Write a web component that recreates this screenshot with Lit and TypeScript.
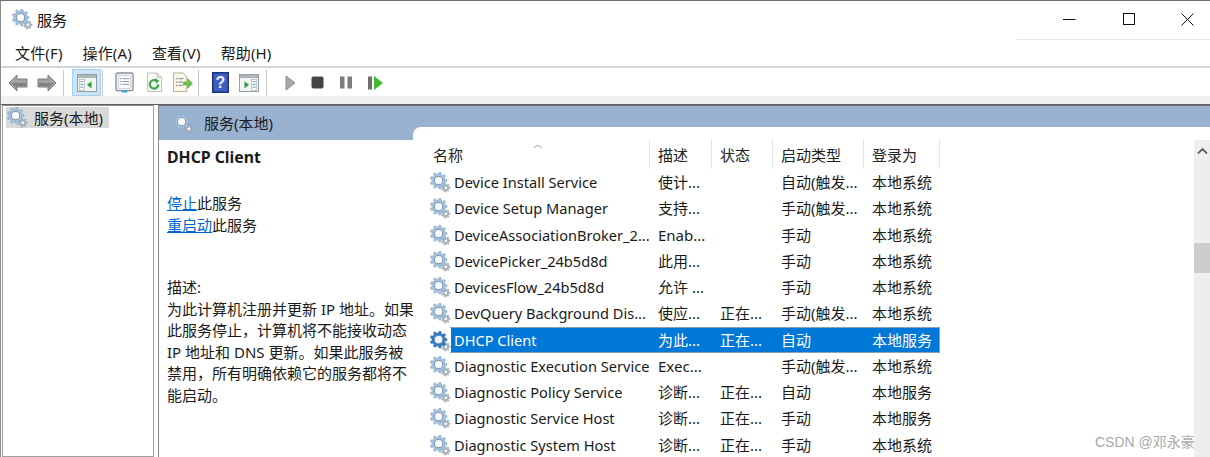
import { LitElement, html, css, svg } from 'lit';
import { customElement } from 'lit/decorators.js';

// gear outline, computed so both cogs share one shape
function gearPath(cx: number, cy: number, outer: number, inner: number, teeth: number) {
  const pts: string[] = [];
  const step = (Math.PI * 2) / teeth;
  for (let i = 0; i < teeth; i++) {
    const a = i * step;
    const list: [number, number][] = [
      [a - step * 0.32, inner],
      [a - step * 0.17, outer],
      [a + step * 0.17, outer],
      [a + step * 0.32, inner],
    ];
    for (const [t, r] of list) {
      pts.push(`${(cx + Math.cos(t) * r).toFixed(2)} ${(cy + Math.sin(t) * r).toFixed(2)}`);
    }
  }
  return 'M' + pts.join('L') + 'Z';
}

const BIG = gearPath(9, 9, 8.8, 6.8, 9);
const SMALL = gearPath(16.5, 16.5, 4.6, 3.2, 7);

function gear(selected = false, size = 21) {
  const main = selected ? '#2f7cc8' : '#a6c2de';
  const edge = selected ? '#2a5f9e' : '#7f9fbf';
  const hole = selected ? '#eef5fb' : '#f8fafc';
  return html`<svg class="gear" width=${size} height=${size} viewBox="0 0 22 22">
    <path d=${SMALL} fill="#a9b5c0" stroke="#8c99a6" stroke-width=".5"></path>
    <circle cx="16.5" cy="16.5" r="1.4" fill="#fff"></circle>
    <path d=${BIG} fill=${main} stroke=${edge} stroke-width=".6"></path>
    <circle cx="9" cy="9" r="4.3" fill=${hole} stroke="#6f8dac" stroke-width="1"></circle>
  </svg>`;
}

const windowIcon = (inner: unknown) => html`<svg width="20" height="18" viewBox="0 0 22 20">
  <rect x=".5" y=".5" width="21" height="19" fill="#f2f5f2" stroke="#8b9599"></rect>
  <rect x="1" y="1" width="20" height="3.5" fill="#aeb6ba"></rect>
  ${inner}
</svg>`;

const ICONS = {
  back: html`<svg width="20" height="18" viewBox="0 0 20 18"><path d="M9 1 1 9l8 8v-4h10V5H9z" fill="#a2a2a2" stroke="#7c7c7c" stroke-linejoin="round"></path><path d="M3.500 9H18v3H9v2.500z" fill="#808080"></path></svg>`,
  forward: html`<svg width="20" height="18" viewBox="0 0 20 18"><path d="M11 1l8 8-8 8v-4H1V5h10z" fill="#a2a2a2" stroke="#7c7c7c" stroke-linejoin="round"></path><path d="M16.500 9H2v3h9v2.500z" fill="#808080"></path></svg>`,
  tree: windowIcon(svg`
    <rect x="2.500" y="6" width="5.500" height="12" fill="#fff" stroke="#8ba0b0" stroke-width=".6"></rect>
    <path d="M3.500 8.500h3.500M3.500 11.500h3.500M3.500 14.500h3.500" stroke="#5f84a6"></path>
    <path d="M16 8v8l-5-4z" fill="#2e9e3e"></path>`),
  props: html`<svg width="19" height="21" viewBox="0 0 20 22">
    <rect x="1" y="1" width="18" height="18.500" rx="1.500" fill="#eef1f3" stroke="#8a9198" stroke-width="1.400"></rect>
    <rect x="3.500" y="4" width="13" height="13" fill="#fff" stroke="#b5bcc2" stroke-width=".6"></rect>
    <path d="M5 7h2M8 7h7M5 10h2M8 10h7M5 13h2M8 13h7" stroke="#7b94ad"></path>
    <rect x="7" y="19.500" width="6" height="2" fill="#33a5e5"></rect></svg>`,
  refresh: html`<svg width="17" height="21" viewBox="0 0 18 22">
    <path d="M1.500 1h10.500l4.500 4.500V20.500H1.500z" fill="#fbfbf6" stroke="#b8bcb2"></path>
    <path d="M12 1v4.500h4.500" fill="#e3e5de" stroke="#b8bcb2"></path>
    <path d="M13 13a4.500 4.500 0 1 1-2-3.800" fill="none" stroke="#3aa853" stroke-width="2.400"></path>
    <path d="M9.500 6.500l4.500 2.500-3 3.500z" fill="#3aa853"></path></svg>`,
  export: html`<svg width="21" height="21" viewBox="0 0 22 22">
    <path d="M1.500 1h10l4 4v15.500h-14z" fill="#fbf7e6" stroke="#b1ab93"></path>
    <path d="M4 7h2M7 7h5M4 10.500h2M7 10.500h4M4 14h2M7 14h4" stroke="#6a7a8a"></path>
    <path d="M12 10.500h4.500V7l5 5-5 5v-3.500H12z" fill="#6cc04f" stroke="#4fa83a" stroke-width=".6"></path></svg>`,
  help: html`<svg width="17" height="21" viewBox="0 0 17 21">
    <rect x=".5" y=".5" width="16" height="20" fill="#2a479f" stroke="#1e3480"></rect>
    <rect x="2" y="2" width="13" height="17" fill="#3f5fc4"></rect>
    <text x="8.500" y="16" text-anchor="middle" font-size="16" font-weight="700" font-family="Liberation Sans" fill="#eef">?</text></svg>`,
  panel: windowIcon(svg`
    <rect x="14" y="6" width="5.500" height="12" fill="#fff" stroke="#8ba0b0" stroke-width=".6"></rect>
    <path d="M15 8.500h3.500M15 11.500h3.500M15 14.500h3.500" stroke="#5f84a6"></path>
    <path d="M6 8v8l5-4z" fill="#2e9e3e"></path>`),
  play: html`<svg width="11" height="16" viewBox="0 0 11 16"><path d="M1 1l9 7-9 7z" fill="#a8a8a8" stroke="#8a8a8a"></path></svg>`,
  stop: html`<svg width="13" height="13" viewBox="0 0 13 13"><rect x=".5" y=".5" width="12" height="12" rx="2" fill="#454545"></rect></svg>`,
  pause: html`<svg width="12" height="13" viewBox="0 0 12 13"><rect y=".5" width="4.500" height="12" fill="#7d7d7d"></rect><rect x="7.500" y=".5" width="4.500" height="12" fill="#7d7d7d"></rect></svg>`,
  resume: html`<svg width="15" height="14" viewBox="0 0 15 14"><rect y=".5" width="4" height="13" fill="#6f6f6f"></rect><path d="M6 0l9 7-9 7z" fill="#3dbb35"></path></svg>`,
};

const ROWS = [
  ['Device Install Service', '使计...', '', '自动(触发...', '本地系统'],
  ['Device Setup Manager', '支持...', '', '手动(触发...', '本地系统'],
  ['DeviceAssociationBroker_2...', 'Enab...', '', '手动', '本地系统'],
  ['DevicePicker_24b5d8d', '此用...', '', '手动', '本地系统'],
  ['DevicesFlow_24b5d8d', '允许 ...', '', '手动', '本地系统'],
  ['DevQuery Background Dis...', '使应...', '正在...', '手动(触发...', '本地系统'],
  ['DHCP Client', '为此...', '正在...', '自动', '本地服务'],
  ['Diagnostic Execution Service', 'Exec...', '', '手动(触发...', '本地系统'],
  ['Diagnostic Policy Service', '诊断...', '正在...', '自动', '本地服务'],
  ['Diagnostic Service Host', '诊断...', '正在...', '手动', '本地服务'],
  ['Diagnostic System Host', '诊断...', '正在...', '手动', '本地系统'],
];

const HEADS = ['名称', '描述', '状态', '启动类型', '登录为'];

// full-width comma, spelled out so it survives editors
const COMMA = '\uFF0C';
const DESCRIPTION = [
  '为此计算机注册并更新 IP 地址。如果',
  `此服务停止${COMMA}计算机将不能接收动态`,
  'IP 地址和 DNS 更新。如果此服务被',
  `禁用${COMMA}所有明确依赖它的服务都将不`,
  '能启动。',
];

@customElement('app-root')
export class AppRoot extends LitElement {
  static styles = css`
    :host {
      display: block;
      position: relative;
      width: 1210px;
      height: 457px;
      overflow: hidden;
      background: #fff;
      color: #1a1a1a;
      font-family: 'Noto Sans', 'Noto Sans CJK SC', sans-serif;
      font-size: 15px;
    }
    .window {
      height: 457px;
      display: flex;
      flex-direction: column;
      border-top: 1px solid #6e6e6e;
      border-left: 1px solid #8a8a8a;
      box-sizing: border-box;
    }
    .titlebar {
      height: 39px;
      flex: none;
      display: flex;
      align-items: center;
      padding: 0 0 3px 11px;
      gap: 4px;
      color: #111;
      position: relative;
      box-sizing: border-box;
    }
    .titlebar::after {
      content: '';
      position: absolute;
      left: 1016px;
      right: 0;
      bottom: 0;
      height: 1px;
      background: #e8e8e8;
    }
    .controls {
      margin-left: auto;
      display: flex;
      align-items: center;
      padding-right: 16px;
    }
    .ctl {
      width: 59px;
      height: 36px;
      display: flex;
      align-items: center;
      justify-content: flex-end;
    }
    .menu {
      height: 24px;
      flex: none;
      display: flex;
      align-items: center;
      padding: 0 0 2px 14px;
      gap: 20px;
      letter-spacing: 0.15px;
      box-sizing: content-box;
      border-bottom: 2px solid #d0d6dd;
    }
    .toolbar {
      height: 28px;
      flex: none;
      display: flex;
      align-items: center;
      padding: 1px 0 0 7px;
      box-sizing: border-box;
    }
    .tb {
      display: flex;
      align-items: center;
      flex: none;
      height: 27px;
      box-sizing: border-box;
    }
    .tb.on {
      justify-content: center;
      width: 29px;
      margin: 0 1px 0 8px;
      background: #cce4f7;
      border: 1px solid #a8d0ee;
    }
    .back { width: 29px; }
    .forward { width: 26px; }
    .props { width: 43px; padding-left: 12px; }
    .refresh { width: 26px; }
    .export { width: 26px; }
    .help { width: 40px; padding-left: 13px; }
    .panel { width: 27px; }
    .play { width: 44px; padding-left: 18px; }
    .stop { width: 29px; }
    .pause { width: 28px; }
    .tbsep {
      width: 1px;
      height: 26px;
      flex: none;
      background: #c9c9c9;
    }
    .band {
      height: 8px;
      flex: none;
      background: #f0f0f0;
      border-bottom: 1px solid #5f5f5f;
    }
    .body {
      flex: 1;
      min-height: 0;
      display: flex;
      gap: 4px;
      padding-left: 1px;
    }
    .tree {
      width: 152px;
      flex: none;
      border: 1px solid #a0a0a0;
      border-top: 1px solid #8a8a8a;
      box-sizing: border-box;
      padding: 1px 0 0 3px;
    }
    .tree-item {
      display: inline-flex;
      align-items: center;
      width: 103px;
      height: 21px;
      background: #d9d9d9;
      gap: 6px;
      padding-left: 1px;
      box-sizing: border-box;
    }
    .main {
      flex: 1;
      min-width: 0;
      display: flex;
      flex-direction: column;
      border-left: 1px solid #8a8a8a;
      border-top: 1px solid #6f6f6f;
    }
    .main-head {
      height: 14px;
      flex: none;
      background: #98b2d0;
      display: flex;
      align-items: flex-start;
      padding: 7px 0 0 14px;
      gap: 10px;
      position: relative;
      z-index: 1;
    }
    .main-head span {
      line-height: 22px;
      margin-top: -1px;
    }
    .split {
      flex: 1;
      min-height: 0;
      display: flex;
    }
    .info {
      width: 254px;
      flex: none;
      display: flex;
      flex-direction: column;
    }
    .info-head {
      height: 13px;
      flex: none;
      background: #98b2d0;
    }
    .info-body {
      padding: 7px 0 0 8px;
      line-height: 21.5px;
      white-space: nowrap;
    }
    .info-title {
      font-weight: 700;
      font-size: 15.8px;
      height: 46px;
    }
    .actions {
      height: 84px;
    }
    a {
      color: #0066cc;
      text-decoration: underline;
    }
    .list {
      flex: 1;
      min-width: 0;
      position: relative;
      display: flex;
      background: #fff;
    }
    .corner {
      position: absolute;
      left: 0;
      top: 0;
      width: 8px;
      height: 8px;
      background: #98b2d0;
    }
    .corner::after {
      content: '';
      display: block;
      width: 8px;
      height: 8px;
      background: #fff;
      border-top-left-radius: 8px;
    }
    .table {
      flex: 1;
      min-width: 0;
      padding: 12px 0 0 12px;
    }
    .cols {
      display: grid;
      grid-template-columns: 225px 62px 61px 91px 76px;
    }
    .th {
      height: 30px;
      display: flex;
      align-items: center;
      padding-left: 8px;
      box-sizing: border-box;
      border-right: 1px solid #e6e6e6;
      color: #222;
      position: relative;
    }
    .caret {
      position: absolute;
      left: 108px;
      top: 0;
      font-size: 9px;
      color: #8a8a8a;
      line-height: 10px;
    }
    .row {
      display: contents;
    }
    .td {
      height: 26.25px;
      line-height: 26.25px;
      padding-left: 8px;
      white-space: nowrap;
      overflow: hidden;
      box-sizing: border-box;
    }
    .td.name {
      padding-left: 29px;
      position: relative;
      overflow: visible;
      font-size: 14.6px;
    }
    .td.name .gear {
      position: absolute;
      left: 5px;
      top: 3px;
    }
    .row.sel .td {
      background: #0078d7;
      color: #fff;
      border-top: 1px solid #8aa0b5;
      border-bottom: 1px solid #8aa0b5;
      line-height: 24.25px;
    }
    .row.sel .td.name {
      background: linear-gradient(90deg, transparent 26px, #0078d7 26px);
      border-image: linear-gradient(90deg, transparent 26px, #8aa0b5 26px) 1;
    }
    .row.sel .td.last {
      border-right: 1px solid #8aa0b5;
    }
    .vbar {
      width: 16px;
      flex: none;
      margin-top: 13px;
      background: #eeeeee;
      padding-top: 8px;
      box-sizing: border-box;
      display: flex;
      flex-direction: column;
      align-items: center;
      gap: 89px;
    }
    .thumb {
      width: 100%;
      height: 30px;
      background: #cdcdcd;
    }
    .mark {
      position: absolute;
      left: 1095px;
      top: 431px;
      width: 100px;
      overflow: hidden;
      white-space: nowrap;
      color: #a8a8a8;
      font-family: 'Liberation Sans', 'Noto Sans CJK SC', sans-serif;
      font-size: 14px;
    }
  `;

  render() {
    return html`<div class="window">
        <div class="titlebar">
          ${gear()}
          <span>服务</span>
          <div class="controls">
            <div class="ctl">
              <svg width="13" height="13" viewBox="0 0 13 13"><path d="M0 6.500h12.500" stroke="#111"></path></svg>
            </div>
            <div class="ctl">
              <svg width="12" height="12" viewBox="0 0 12 12"><rect x=".5" y=".5" width="11" height="11" fill="none" stroke="#111"></rect></svg>
            </div>
            <div class="ctl">
              <svg width="13" height="13" viewBox="0 0 13 13"><path d="M.5.500l12 12M12.500.500l-12 12" stroke="#111"></path></svg>
            </div>
          </div>
        </div>
        <div class="menu">
          <span>文件(F)</span><span>操作(A)</span><span>查看(V)</span><span>帮助(H)</span>
        </div>
        <div class="toolbar">
          <div class="tb back">${ICONS.back}</div>
          <div class="tb forward">${ICONS.forward}</div>
          <div class="tbsep"></div>
          <div class="tb on">${ICONS.tree}</div>
          <div class="tbsep"></div>
          <div class="tb props">${ICONS.props}</div>
          <div class="tb refresh">${ICONS.refresh}</div>
          <div class="tb export">${ICONS.export}</div>
          <div class="tbsep"></div>
          <div class="tb help">${ICONS.help}</div>
          <div class="tb panel">${ICONS.panel}</div>
          <div class="tbsep"></div>
          <div class="tb play">${ICONS.play}</div>
          <div class="tb stop">${ICONS.stop}</div>
          <div class="tb pause">${ICONS.pause}</div>
          <div class="tb">${ICONS.resume}</div>
        </div>
        <div class="band"></div>
        <div class="body">
          <div class="tree">
            <div class="tree-item">${gear()}<span>服务(本地)</span></div>
          </div>
          <div class="main">
            <div class="main-head">${gear()}<span>服务(本地)</span></div>
            <div class="split">
              <div class="info">
                <div class="info-head"></div>
                <div class="info-body">
                  <div class="info-title">DHCP Client</div>
                  <div class="actions">
                    <div><a>停止</a>此服务</div>
                    <div><a>重启动</a>此服务</div>
                  </div>
                  <div>描述:</div>
                  ${DESCRIPTION.map((line) => html`<div>${line}</div>`)}
                </div>
              </div>
              <div class="list">
                <div class="corner"></div>
                <div class="table">
                  <div class="cols">
                    ${HEADS.map(
                      (h, i) => html`<div class="th">${h}${i === 0 ? html`<span class="caret">︿</span>` : ''}</div>`,
                    )}
                    ${ROWS.map(
                      (r) => html`<div class="row ${r[0] === 'DHCP Client' ? 'sel' : ''}">
                        ${r.map(
                          (c, i) => html`<div class="td ${i === 0 ? 'name' : ''} ${i === 4 ? 'last' : ''}">
                            ${i === 0 ? gear(r[0] === 'DHCP Client') : ''}${c}
                          </div>`,
                        )}
                      </div>`,
                    )}
                  </div>
                </div>
                <div class="vbar">
                  <svg width="11" height="6" viewBox="0 0 11 6"><path d="M1 5.500 5.500 1 10 5.500" fill="none" stroke="#606060" stroke-width="1.800"></path></svg>
                  <div class="thumb"></div>
                </div>
              </div>
            </div>
          </div>
        </div>
      </div>
      <div class="mark">CSDN @邓永豪</div>`;
  }
}
